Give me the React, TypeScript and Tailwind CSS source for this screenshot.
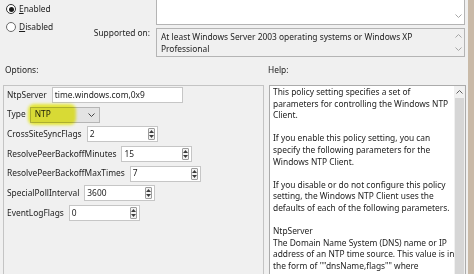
import React from 'react';

const helpLines = [
  'This policy setting specifies a set of',
  'parameters for controlling the Windows NTP',
  'Client.',
  '',
  'If you enable this policy setting, you can',
  'specify the following parameters for the',
  'Windows NTP Client.',
  '',
  'If you disable or do not configure this policy',
  'setting, the Windows NTP Client uses the',
  'defaults of each of the following parameters.',
  '',
  'NtpServer',
  'The Domain Name System (DNS) name or IP',
  'address of an NTP time source. This value is in',
  'the form of ""dnsName,flags"" where',
];

const numberRows = [
  { label: 'CrossSiteSyncFlags', value: '2' },
  { label: 'ResolvePeerBackoffMinutes', value: '15' },
  { label: 'ResolvePeerBackoffMaxTimes', value: '7' },
  { label: 'SpecialPollInterval', value: '3600' },
  { label: 'EventLogFlags', value: '0' },
];

const Chevron: React.FC<{ up?: boolean; className?: string }> = ({ up, className }) => (
  <svg width="7" height="4" viewBox="0 0 7 4" className={className}>
    <polyline
      points={up ? '0.5,3.5 3.5,0.5 6.5,3.5' : '0.5,0.5 3.5,3.5 6.5,0.5'}
      fill="none"
      stroke="currentColor"
      strokeWidth="1"
    />
  </svg>
);

const Spinner: React.FC = () => (
  <div className="ml-auto mr-[2px] flex h-[12px] w-[7px] flex-col items-center justify-between rounded-[1px] border border-[#9c9c9c] bg-[#f3f3f3] py-[1px]">
    <svg width="5" height="3" viewBox="0 0 5 3">
      <polygon points="0,3 2.5,0 5,3" fill="#3c3c3c" />
    </svg>
    <svg width="5" height="3" viewBox="0 0 5 3">
      <polygon points="0,0 2.5,3 5,0" fill="#3c3c3c" />
    </svg>
  </div>
);

const Radio: React.FC<{ checked?: boolean; label: string }> = ({ checked, label }) => (
  <div className="flex h-[12px] items-center gap-[3px]">
    <div
      className={`flex h-[10px] w-[10px] items-center justify-center rounded-full border bg-white ${
        checked ? 'border-[#333333]' : 'border-[#6b6b6b]'
      }`}
    >
      {checked && <div className="h-[5px] w-[5px] rounded-full bg-[#1a1a1a]" />}
    </div>
    <span>
      <span className="underline underline-offset-[1px]">{label[0]}</span>
      {label.slice(1)}
    </span>
  </div>
);

export default function App() {
  return (
    <div
      className="flex h-[274px] w-[474px] overflow-hidden bg-[#f0f0f0] text-[8.4px] text-[#1c1c1c]"
      style={{ fontFamily: '"Noto Sans", "Open Sans", sans-serif' }}
    >
      <div className="flex w-[468px] flex-col">
        {/* top: state + supported on */}
        <div className="flex h-[57px]">
          <div className="flex w-[156px]">
            <div className="flex w-[88px] flex-col gap-[6px] pl-[6px] pt-[3px]">
              <Radio checked label="Enabled" />
              <Radio label="Disabled" />
            </div>
            <div className="flex-1 pr-[6px] pt-[27px] text-right leading-[11.6px]">Supported on:</div>
          </div>
          <div className="mr-[3px] flex flex-1 flex-col">
            <div className="flex h-[25px] border-x border-b border-[#b4b4b4] bg-white">
              <div className="flex-1" />
              <div className="flex w-[12px] flex-col items-center justify-end pb-[6px] text-[#a6a6a6]">
                <Chevron />
              </div>
            </div>
            <div className="mt-[3px] flex h-[29px] border border-[#b4b4b4] bg-[#f0f0f0]">
              <div className="flex-1 pl-[4px] pt-[2px] leading-[11.6px]">
                <div>At least Windows Server 2003 operating systems or Windows XP</div>
                <div>Professional</div>
              </div>
              <div className="flex w-[12px] flex-col items-center justify-between py-[5px] text-[#a6a6a6]">
                <Chevron up />
                <Chevron />
              </div>
            </div>
          </div>
        </div>

        {/* section labels */}
        <div className="mt-[7px] flex h-[12px] items-center">
          <div className="w-[266px] pl-[5px]">Options:</div>
          <div className="pl-[2px]">Help:</div>
        </div>

        {/* panels */}
        <div className="mt-[9px] flex flex-1">
          <div className="ml-[3px] flex w-[261px] flex-col gap-[3.7px] border-x border-t border-[#c4c4c4] pl-[3px] pt-[1px]">
            <div className="flex h-[16px] items-center gap-[5px]">
              <span>NtpServer</span>
              <div className="flex h-[16px] w-[131px] items-center border border-[#c6c6c6] bg-white pl-[2px]">
                time.windows.com,0x9
              </div>
            </div>
            <div className="relative flex h-[16px] items-center gap-[4px]">
              <span>Type</span>
              <div className="flex h-[16px] w-[70px] items-center border border-[#b5b5b5] bg-[#e3e3e3] pl-[4px] pr-[4px]">
                <span>NTP</span>
                <Chevron className="ml-auto text-[#444444]" />
              </div>
              <div className="pointer-events-none absolute left-[21px] top-[-3px] h-[21px] w-[48px] rounded-[6px] bg-[#f3f53b] mix-blend-multiply blur-[1.5px]" />
            </div>
            {numberRows.map((row) => (
              <div key={row.label} className="flex h-[16px] items-center gap-[5px]">
                <span>{row.label}</span>
                <div className="flex h-[16px] w-[71px] items-center border border-[#c6c6c6] bg-white pl-[2px]">
                  <span>{row.value}</span>
                  <Spinner />
                </div>
              </div>
            ))}
          </div>

          <div className="ml-[5px] flex w-[197px] border-x border-t border-[#ababab] bg-white">
            <div className="flex-1 pl-[3px] leading-[11.6px]">
              {helpLines.map((line, i) => (
                <div key={i} className="h-[11.6px] whitespace-nowrap">
                  {line}
                </div>
              ))}
            </div>
            <div className="flex w-[11px] flex-col bg-[#f0f0f0]">
              <div className="flex h-[12px] items-center justify-center text-[#606060]">
                <Chevron up />
              </div>
              <div className="mx-[1px] flex-1 bg-[#d6d6d6]" />
            </div>
          </div>
        </div>
      </div>
      <div className="w-[6px] bg-[#c9baa8]" />
    </div>
  );
}
